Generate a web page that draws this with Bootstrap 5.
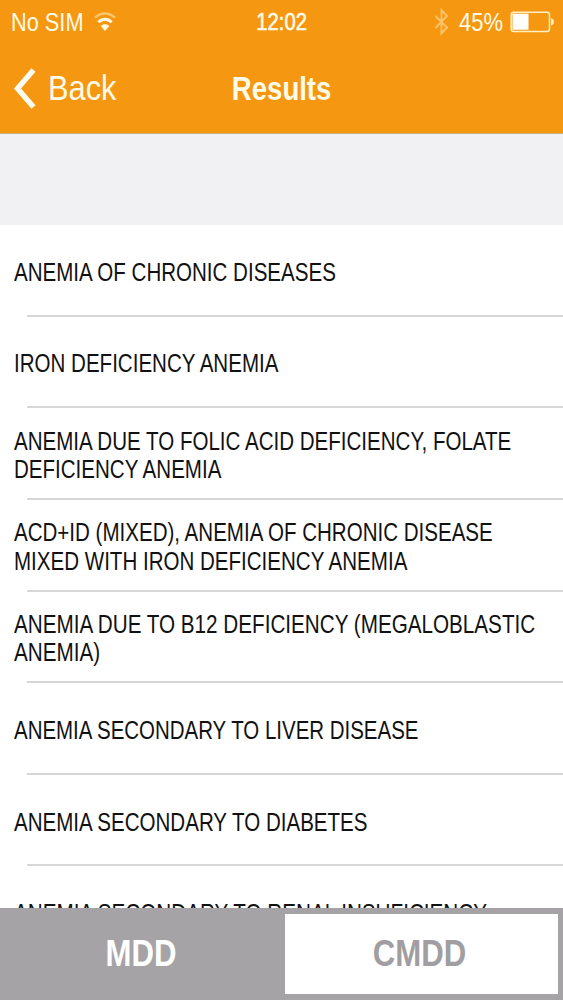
<!DOCTYPE html>
<html lang="en">
<head>
<meta charset="utf-8">
<meta name="viewport" content="width=device-width, initial-scale=1">
<title>Results</title>
<link href="https://cdn.jsdelivr.net/npm/bootstrap@5.3.0/dist/css/bootstrap.min.css" rel="stylesheet">
<style>
  body { font-family: "Liberation Sans", Arial, sans-serif; color: #111; height: 1000px; }
  .top-area { background: #f59711; height: 134px; border-bottom: 1px solid #c9ae80; color: #fffbe6; }
  .status-row { height: 44px; font-size: 25px; line-height: 44px; }
  .title-row { height: 89px; line-height: 89px; }
  .third { flex: 1 1 0; min-width: 0; }
  /* condensed lettering */
  .squeeze { display: block; white-space: nowrap; transform: scaleX(.79); transform-origin: left center; }
  .carrier { width: 83px; margin-left: 10.5px; transform: scaleX(.87); }
  .wifi { margin-left: 0; }
  .clock { font-size: 24.5px; transform: scaleX(.825); transform-origin: center; -webkit-text-stroke: .6px #fffbe6; }
  .percent { transform: scaleX(.88); transform-origin: right center; margin-right: -1px; }
  .back-text { font-size: 35px; transform: scaleX(.88); margin: -2px 0 0 1.5px; }
  .screen-title { font-size: 33px; font-weight: 700; transform: scaleX(.835); transform-origin: center; }
  .section-gap { height: 91px; background: #f1f0f3; }
  .result-row {
    height: 91.65px; padding: 2px 0 0 14px; border: 0; border-radius: 0 !important; color: #111;
    background: linear-gradient(#d6d6d8, #d6d6d8) 27px 100% / 100% 2px no-repeat #fff;
    font-size: 26px; line-height: 28.3px;
  }
  .result-row .looser { transform: scaleX(.7945); }
  .result-row .tighter { transform: scaleX(.787); }
  .tab-area { height: 92px; background: #a5a3a6; padding: 6px 5px 6px 0; z-index: 2; }
  .tab-item { border: 0; border-radius: 0; padding: 0; background: none; color: #fff; font-size: 36px; font-weight: 700; line-height: 80px; }
  .tab-left { width: 285px; padding-right: 3px; }
  .tab-right { background: #fff; color: #a09ea1; width: 273px; padding-right: 4px; }
  .tab-item .squeeze { transform: scaleX(.865); transform-origin: center; }
</style>
</head>
<body class="d-flex flex-column overflow-hidden bg-white">
  <header class="top-area flex-shrink-0">
    <div class="status-row d-flex">
      <div class="third d-flex align-items-center">
        <span class="squeeze carrier">No SIM</span>
        <svg class="wifi" width="22" height="20" viewBox="0 0 22 20" fill="none" stroke="#fffbe6">
          <path d="M1 5.700C6.500 0 15.500 0 21 5.700" stroke="#fcc46a" stroke-width="2.600"/>
          <path d="M4.300 10.200C8.300 6.300 13.700 6.300 17.700 10.200" stroke-width="2.900"/>
          <path d="M11 19L6.700 14C9.200 11.700 12.800 11.700 15.300 14Z" fill="#fffbe6" stroke="none"/>
        </svg>
      </div>
      <span class="squeeze clock">12:02</span>
      <div class="third d-flex align-items-center justify-content-end">
        <svg width="15" height="28" viewBox="0 0 15 28" fill="none" stroke="#fcc46a" stroke-width="1.900">
          <path d="M1.500 8L13 19.500L7.500 25.500V2L13 8L1.500 20"/>
        </svg>
        <span class="squeeze percent ms-1">45%</span>
        <svg class="ms-2 me-2" width="45" height="22" viewBox="0 0 45 22">
          <rect x="1.200" y="1.200" width="38.300" height="19.300" rx="2.500" fill="none" stroke="#fff0c4" stroke-width="1.500"/>
          <rect x="2.500" y="2.700" width="16" height="16" fill="#fff"/>
          <path d="M41.500 7.500C44 8 44 13.500 41.500 14Z" fill="#fff0c4" stroke="#fff0c4"/>
        </svg>
      </div>
    </div>
    <div class="title-row d-flex">
      <a href="#" class="third d-flex align-items-center text-reset text-decoration-none">
        <svg class="flex-shrink-0" width="46" height="44" viewBox="0 0 46 44" fill="none" stroke="#fffdf0" stroke-width="5.400">
          <path d="M33.500 3L17.500 21.500L33.500 40"/>
        </svg>
        <span class="squeeze back-text">Back</span>
      </a>
      <span class="squeeze screen-title">Results</span>
      <div class="third"></div>
    </div>
  </header>
  <div class="section-gap flex-shrink-0"></div>
  <main class="flex-grow-1 overflow-hidden">
    <ul class="list-group list-group-flush">
      <li class="list-group-item result-row d-flex align-items-center"><span class="squeeze">ANEMIA OF CHRONIC DISEASES</span></li>
      <li class="list-group-item result-row d-flex align-items-center"><span class="squeeze">IRON DEFICIENCY ANEMIA</span></li>
      <li class="list-group-item result-row d-flex align-items-center"><span class="squeeze">ANEMIA DUE TO FOLIC ACID DEFICIENCY, FOLATE<br>DEFICIENCY ANEMIA</span></li>
      <li class="list-group-item result-row d-flex align-items-center"><span class="squeeze">ACD+ID (MIXED), ANEMIA OF CHRONIC DISEASE<br>MIXED WITH IRON DEFICIENCY ANEMIA</span></li>
      <li class="list-group-item result-row d-flex align-items-center"><span class="squeeze looser">ANEMIA DUE TO B12 DEFICIENCY (MEGALOBLASTIC<br>ANEMIA)</span></li>
      <li class="list-group-item result-row d-flex align-items-center"><span class="squeeze tighter">ANEMIA SECONDARY TO LIVER DISEASE</span></li>
      <li class="list-group-item result-row d-flex align-items-center"><span class="squeeze">ANEMIA SECONDARY TO DIABETES</span></li>
      <li class="list-group-item result-row d-flex align-items-center"><span class="squeeze looser">ANEMIA SECONDARY TO RENAL INSUFICIENCY</span></li>
    </ul>
  </main>
  <nav class="tab-area d-flex flex-shrink-0">
    <button type="button" class="tab-item tab-left"><span class="squeeze">MDD</span></button>
    <button type="button" class="tab-item tab-right"><span class="squeeze">CMDD</span></button>
  </nav>
<script src="https://cdn.jsdelivr.net/npm/bootstrap@5.3.0/dist/js/bootstrap.bundle.min.js"></script>
</body>
</html>
